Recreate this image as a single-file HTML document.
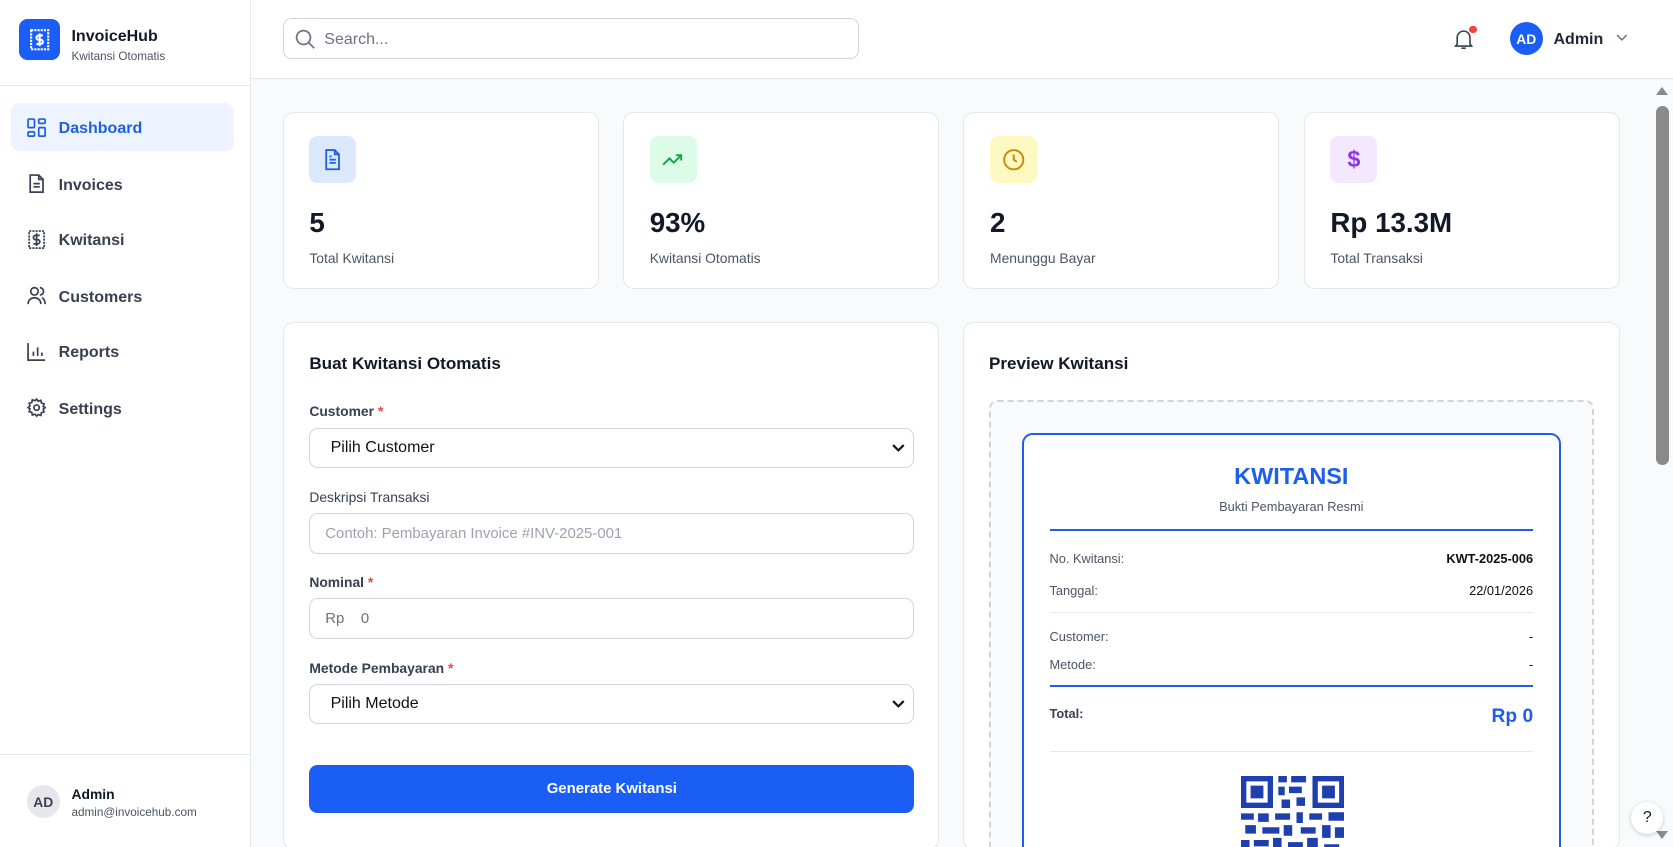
<!DOCTYPE html>
<html><head><meta charset="utf-8"><style>
*{box-sizing:border-box;margin:0;padding:0}
html,body{width:1673px;height:847px;overflow:hidden}
body{font-family:"Liberation Sans",sans-serif;background:#f8fafc;color:#111827}
#r{zoom:1.06696;width:1568px;height:794px;position:relative;overflow:hidden}
.a{position:absolute}
.side{left:0;top:0;width:235px;height:794px;background:#fff;border-right:1px solid #e5e7eb}
.nav{position:absolute;left:10px;width:209px;height:45px;border-radius:8px;display:flex;align-items:center;padding-left:15px;padding-top:3px;font-size:15px;color:#374151;font-weight:bold}
.nav svg{margin-right:12px;margin-top:-3px}
.nav.act{background:#eef4ff;color:#1d5fe8}
.top{left:235px;top:0;width:1333px;height:74px;background:#fff;border-bottom:1px solid #e5e7eb}
.card{position:absolute;background:#fff;border:1px solid #e5e7eb;border-radius:10px;overflow:hidden}
.ib{position:absolute;left:24px;top:22px;width:44px;height:44px;border-radius:8px;display:flex;align-items:center;justify-content:center}
.num{position:absolute;left:24px;top:88px;font-size:26px;font-weight:bold}
.lbl{position:absolute;left:24px;top:128px;font-size:13px;color:#4b5563}
.fl{position:absolute;left:24px;font-size:13px;font-weight:bold;color:#374151}
.fl i{color:#ef4444;font-style:normal}
.inp{position:absolute;left:24px;width:567px;height:38px;border:1px solid #d1d5db;border-radius:8px;font-size:15px;display:flex;align-items:center;padding-left:19px;color:#111}
.row{position:absolute;left:24px;right:24px;font-size:12px;color:#4b5563;display:flex;justify-content:space-between}
.row b{color:#111}
</style></head><body><div id="r">
<div class="a side">
 <div class="a" style="left:18px;top:18px;width:38px;height:38px;background:#1a5ef5;border-radius:8px;display:flex;align-items:center;justify-content:center">
  <svg width="20" height="22" viewBox="0 0 20 22" fill="none" stroke="#fff" stroke-width="2"><rect x="2" y="2" width="16" height="18" stroke-dasharray="2 1"/><path d="M13 7h-4a2 2 0 0 0 0 4h2a2 2 0 0 1 0 4H7M10 5v12"/></svg>
 </div>
 <div class="a" style="left:67px;top:26px;font-size:15px;font-weight:bold">InvoiceHub</div>
 <div class="a" style="left:67px;top:47px;font-size:11px;color:#4b5563">Kwitansi Otomatis</div>
 <div class="a" style="left:0;top:80px;width:234px;border-top:1px solid #e5e7eb"></div>
 <div class="nav act" style="top:97px"><svg width="18" height="18" viewBox="0 0 18 18" fill="none" stroke="#1d5fe8" stroke-width="1.6"><rect x="1" y="1" width="6" height="8" rx="1"/><rect x="11" y="1" width="6" height="4" rx="1"/><rect x="11" y="9" width="6" height="8" rx="1"/><rect x="1" y="13" width="6" height="4" rx="1"/></svg>Dashboard</div>
 <div class="nav" style="top:150px"><svg width="18" height="18" viewBox="0 0 18 18" fill="none" stroke="#374151" stroke-width="1.6"><path d="M3 1h8l4 4v12H3z"/><path d="M11 1v4h4M6 9h6M6 12h6"/></svg>Invoices</div>
 <div class="nav" style="top:202px"><svg width="18" height="18" viewBox="0 0 18 18" fill="none" stroke="#374151" stroke-width="1.6"><rect x="2" y="1" width="14" height="16" stroke-dasharray="2 1"/><path d="M12 5H8a1.8 1.8 0 0 0 0 4h2a1.8 1.8 0 0 1 0 4H6M9 3v12"/></svg>Kwitansi</div>
 <div class="nav" style="top:255px"><svg width="18" height="18" viewBox="0 0 18 18" fill="none" stroke="#374151" stroke-width="1.6"><circle cx="7" cy="5" r="3.5"/><path d="M1 17c0-4 3-6 6-6s6 2 6 6M12 1.5a3.5 3.5 0 0 1 0 7M14 11c2 1 3 3 3 6"/></svg>Customers</div>
 <div class="nav" style="top:307px"><svg width="18" height="18" viewBox="0 0 18 18" fill="none" stroke="#374151" stroke-width="1.6"><path d="M1 1v16h16M6 13V9M10 13V5M14 13v-3"/></svg>Reports</div>
 <div class="nav" style="top:360px"><svg width="18" height="18" viewBox="0 0 18 18" fill="none" stroke="#374151" stroke-width="1.6"><circle cx="9" cy="9" r="2.5"/><path d="M9 1l1.5 2 2.5-.8.5 2.5 2.5.8-.8 2.5L17 9l-1.8 1.5.8 2.5-2.5.8-.5 2.5-2.5-.8L9 17l-1.5-1.8-2.5.8-.5-2.5-2.5-.8.8-2.5L1 9l1.8-1.5L2 5l2.5-.8L5 1.7l2.5.8z"/></svg>Settings</div>
 <div class="a" style="left:0;top:707px;width:234px;border-top:1px solid #e5e7eb"></div>
 <div class="a" style="left:25px;top:736px;width:31px;height:31px;border-radius:50%;background:#e5e7eb;font-size:13px;font-weight:bold;color:#374151;display:flex;align-items:center;justify-content:center">AD</div>
 <div class="a" style="left:67px;top:737px;font-size:13px;font-weight:bold">Admin</div>
 <div class="a" style="left:67px;top:755px;font-size:11px;color:#4b5563">admin@invoicehub.com</div>
</div>
<div class="a top">
 <div class="a" style="left:30px;top:17px;width:540px;height:38px;border:1px solid #d1d5db;border-radius:8px">
  <svg class="a" style="left:11px;top:9px" width="19" height="19" viewBox="0 0 19 19" fill="none" stroke="#6b7280" stroke-width="1.6"><circle cx="8" cy="8" r="6.5"/><path d="M13 13l5 5"/></svg>
  <div class="a" style="left:38px;top:11px;font-size:15px;color:#6b7280">Search...</div>
 </div>
 <svg class="a" style="left:1128px;top:27px" width="18" height="20" viewBox="0 0 18 20" fill="none" stroke="#374151" stroke-width="1.5"><path d="M3 14V8a6 6 0 0 1 12 0v6l1.5 2h-15z M7 18h4"/></svg>
 <div class="a" style="left:1142px;top:24px;width:7px;height:7px;border-radius:50%;background:#ef4444"></div>
 <div class="a" style="left:1180px;top:21px;width:31px;height:31px;border-radius:50%;background:#1a5ef5;color:#fff;font-size:13px;font-weight:bold;display:flex;align-items:center;justify-content:center">AD</div>
 <div class="a" style="left:1221px;top:29px;font-size:15px;font-weight:bold;color:#1f2937">Admin</div>
 <svg class="a" style="left:1280px;top:32px" width="11" height="7" viewBox="0 0 11 7" fill="none" stroke="#6b7280" stroke-width="1.4"><path d="M1 1l4.5 4.5L10 1"/></svg>
</div>
<div class="a" style="left:1548px;top:75px;width:20px;height:719px;background:#f8fafc">
 <div class="a" style="left:4px;top:7px;border-left:6px solid transparent;border-right:6px solid transparent;border-bottom:8px solid #8a8a8a"></div>
 <div class="a" style="left:4px;top:24px;width:12px;height:337px;border-radius:6px;background:#8a8a8a"></div>
 <div class="a" style="left:4px;top:704px;border-left:6px solid transparent;border-right:6px solid transparent;border-top:8px solid #8a8a8a"></div>
</div>
<div class="card" style="left:265px;top:105px;width:296px;height:166px"><div class="ib" style="background:#dbe8fe"><svg width="18" height="20" viewBox="0 0 18 20" fill="none" stroke="#1d5fe8" stroke-width="1.7"><path d="M3 1h8l4 4v14H3z"/><path d="M11 1v4h4M6 10h6M6 13h6M6 7h2"/></svg></div><div class="num">5</div><div class="lbl">Total Kwitansi</div></div>
<div class="card" style="left:584px;top:105px;width:296px;height:166px"><div class="ib" style="background:#dcfce7"><svg width="20" height="14" viewBox="0 0 20 14" fill="none" stroke="#16a34a" stroke-width="1.8"><path d="M1 12l6-6 4 4 7-7M13 3h5v5"/></svg></div><div class="num">93%</div><div class="lbl">Kwitansi Otomatis</div></div>
<div class="card" style="left:903px;top:105px;width:296px;height:166px"><div class="ib" style="background:#fef9c3"><svg width="22" height="22" viewBox="0 0 22 22" fill="none" stroke="#ca8a04" stroke-width="1.8"><circle cx="11" cy="11" r="9"/><path d="M11 6v5l3 2"/></svg></div><div class="num">2</div><div class="lbl">Menunggu Bayar</div></div>
<div class="card" style="left:1222px;top:105px;width:296px;height:166px"><div class="ib" style="background:#f3e8ff"><span style="color:#9333ea;font-size:22px;font-weight:bold">$</span></div><div class="num">Rp 13.3M</div><div class="lbl">Total Transaksi</div></div>
<div class="card" style="left:265px;top:302px;width:615px;height:495px">
 <div class="a" style="left:24px;top:29px;font-size:16px;font-weight:bold">Buat Kwitansi Otomatis</div>
 <div class="fl" style="top:75px">Customer <i>*</i></div>
 <div class="inp" style="top:98px">Pilih Customer<svg class="a" style="right:8px;top:14px" width="12" height="8" viewBox="0 0 12 8" fill="none" stroke="#111" stroke-width="2"><path d="M1 1l5 5 5-5"/></svg></div>
 <div class="fl" style="top:155px;font-weight:normal">Deskripsi Transaksi</div>
 <div class="inp" style="top:178px;color:#9ca3af;font-size:14px;padding-left:14px">Contoh: Pembayaran Invoice #INV-2025-001</div>
 <div class="fl" style="top:235px">Nominal <i>*</i></div>
 <div class="inp" style="top:258px;color:#6b7280;font-size:14px;padding-left:14px">Rp&nbsp;&nbsp;&nbsp;&nbsp;0</div>
 <div class="fl" style="top:316px">Metode Pembayaran <i>*</i></div>
 <div class="inp" style="top:338px">Pilih Metode<svg class="a" style="right:8px;top:14px" width="12" height="8" viewBox="0 0 12 8" fill="none" stroke="#111" stroke-width="2"><path d="M1 1l5 5 5-5"/></svg></div>
 <div class="a" style="left:24px;top:414px;width:567px;height:45px;border-radius:8px;background:#1a5ef5;color:#fff;font-size:14px;font-weight:bold;display:flex;align-items:center;justify-content:center">Generate Kwitansi</div>
</div>
<div class="card" style="left:903px;top:302px;width:615px;height:495px">
 <div class="a" style="left:23px;top:29px;font-size:16px;font-weight:bold">Preview Kwitansi</div>
 <div class="a" style="left:23px;top:72px;width:567px;height:460px;border:2px dashed #d1d5db;border-radius:8px;background:#f8fafc">
  <div class="a" style="left:29px;top:29px;width:505px;height:440px;border:2px solid #1d5fe8;border-radius:10px;background:#fff">
   <div class="a" style="left:0;right:0;top:26px;text-align:center;font-size:22px;font-weight:bold;color:#1d5fe8">KWITANSI</div>
   <div class="a" style="left:0;right:0;top:60px;text-align:center;font-size:12px;color:#4b5563">Bukti Pembayaran Resmi</div>
   <div class="a" style="left:24px;right:24px;top:88px;border-top:2px solid #1d5fe8"></div>
   <div class="row" style="top:109px"><span>No. Kwitansi:</span><b>KWT-2025-006</b></div>
   <div class="row" style="top:139px"><span>Tanggal:</span><span style="color:#111">22/01/2026</span></div>
   <div class="a" style="left:24px;right:24px;top:166px;border-top:1px solid #e5e7eb"></div>
   <div class="row" style="top:182px"><span>Customer:</span><span style="color:#111">-</span></div>
   <div class="row" style="top:208px"><span>Metode:</span><span style="color:#111">-</span></div>
   <div class="a" style="left:24px;right:24px;top:234px;border-top:2px solid #1d5fe8"></div>
   <div class="row" style="top:254px"><b style="color:#374151">Total:</b><b style="color:#1d5fe8;font-size:18px">Rp 0</b></div>
   <div class="a" style="left:24px;right:24px;top:296px;border-top:1px solid #e5e7eb"></div>
   <svg class="a" style="left:203px;top:320px" width="97" height="80" viewBox="0 0 97 80" fill="#1e40af"><path d="M0 0h30v30H0zM5 5v20h20V5zM9 9h12v12H9zM67 0h30v30H67zM72 5v20h20V5zM76 9h12v12H76zM35 0h8v6h-8zM47 0h14v6H47zM35 10h6v8h-6zM45 10h12v6H45zM52 20h8v8h-8zM38 22h8v8h-8zM0 35h12v6H0zM16 35h10v8H16zM32 35h14v6H32zM52 34h6v10h-6zM64 35h12v6H64zM82 34h15v8H82zM4 46h10v8H4zM20 48h16v6H20zM40 46h8v10h-8zM56 48h14v6H56zM76 46h8v12h-8zM88 48h9v10h-9zM0 60h8v10H0zM12 60h14v6H12zM30 58h8v12h-8zM44 62h14v6H44zM62 58h10v10H62zM78 64h14v6H78z"/></svg>
  </div>
 </div>
</div>
<div class="a" style="left:1529px;top:752px;width:30px;height:30px;border-radius:50%;background:#fff;box-shadow:0 1px 4px rgba(0,0,0,.2);font-size:15px;display:flex;align-items:center;justify-content:center">?</div>
</div></body></html>
